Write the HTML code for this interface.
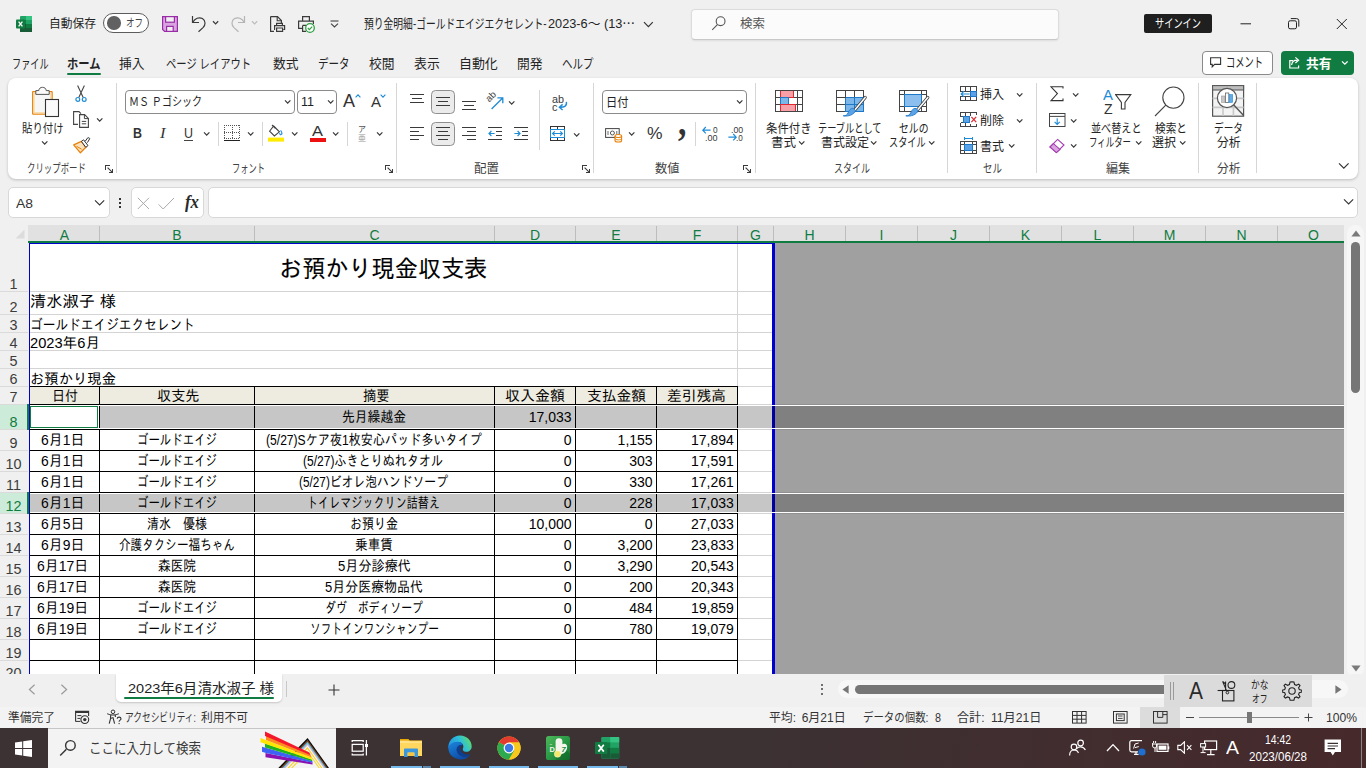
<!DOCTYPE html>
<html lang="ja"><head><meta charset="utf-8"><title>Excel</title>
<style>
html,body{margin:0;padding:0}
body{width:1366px;height:768px;overflow:hidden;position:relative;background:#f0f0f0;font-family:"Liberation Sans","Noto Sans CJK JP",sans-serif;color:#242424}
div,span,svg{position:absolute;box-sizing:border-box}
section{position:absolute;left:0;top:0;width:0;height:0}
.t{white-space:pre;transform-origin:0 50%}
.u{font-family:"Liberation Sans","Noto Sans CJK JP",sans-serif}
.c{font-family:"Liberation Sans","IPAGothic",sans-serif;color:#000}
.s{font-family:"Liberation Serif",serif;font-style:italic}
.d{font-family:"DejaVu Sans",sans-serif}
.sb{font-family:"Liberation Serif",serif;font-weight:bold}
</style></head>
<body>

<section aria-label="title bar"><svg style="left:16px;top:16px;" width="16" height="16" viewBox="0 0 16 16">
<rect x="4" y="0" width="12" height="16" rx="1" fill="#21a366"/>
<rect x="10" y="0" width="6" height="4" fill="#33c481"/>
<rect x="4" y="4" width="6" height="4" fill="#107c41"/>
<rect x="10" y="8" width="6" height="4" fill="#107c41"/>
<rect x="4" y="8" width="6" height="8" fill="#185c37"/>
<rect x="10" y="12" width="6" height="4" fill="#185c37"/>
<rect x="0" y="3.5" width="9" height="9" rx="1" fill="#107c41"/>
<path d="M2.6 5.6 L6.4 10.4 M6.4 5.6 L2.6 10.4" stroke="#fff" stroke-width="1.3"/>
</svg><span class="t u" style="left:48.5px;transform:scaleX(0.979);top:15.0px;font-size:12px;line-height:18px;">自動保存</span><div style="left:103px;top:13px;width:46px;height:20px;border:1px solid #5c5c5c;border-radius:10px;background:#fff"></div><div style="left:107px;top:16px;width:13.5px;height:13.5px;border-radius:50%;background:#616161"></div><span class="t u" style="left:126.0px;transform:scaleX(0.739);top:14.5px;font-size:11.5px;line-height:17px;color:#444;">オフ</span><svg style="left:162px;top:16px;" width="16" height="16" viewBox="0 0 16 16">
<path d="M0.6 0.6 H15.4 V15.4 H2.6 L0.6 13.4 Z" fill="#d9a4e0" stroke="#9a2ca8" stroke-width="1.2"/>
<rect x="3.6" y="0.6" width="8.8" height="5.6" fill="#f0f0f0" stroke="#9a2ca8" stroke-width="1.2"/>
<rect x="4.6" y="10.4" width="6.6" height="5" fill="#f0f0f0" stroke="#9a2ca8" stroke-width="1.2"/>
</svg><svg style="left:191px;top:14px;" width="16" height="19" viewBox="0 0 16 19"><path d="M1.5 2 V8.5 H8 M1.8 8.2 C4 4.5 8 2.6 11.4 4.6 C15 6.8 14.6 11 12 13.6 L7.5 17.8" fill="none" stroke="#3b3b3b" stroke-width="1.2"/></svg><svg style="left:211.9px;top:20.099999999999998px;" width="7.2" height="5.2" viewBox="0 0 7.2 5.2"><path d="M1 1.3 L3.6 3.9 L6.2 1.3" fill="none" stroke="#3a3a3a" stroke-width="1.25"/></svg><svg style="left:230px;top:14px;" width="16" height="19" viewBox="0 0 16 19"><path d="M14.5 2 V8.5 H8 M14.2 8.2 C12 4.5 8 2.6 4.6 4.6 C1 6.8 1.4 11 4 13.6 L8.5 17.8" fill="none" stroke="#b4b4b4" stroke-width="1.2"/></svg><svg style="left:250.9px;top:20.099999999999998px;" width="7.2" height="5.2" viewBox="0 0 7.2 5.2"><path d="M1 1.3 L3.6 3.9 L6.2 1.3" fill="none" stroke="#bdbdbd" stroke-width="1.25"/></svg><svg style="left:270px;top:16px;" width="16" height="16" viewBox="0 0 16 16">
<path d="M0.6 0.6 H7.5 L11.4 4.5 V7 M0.6 0.6 V15.4 H4" fill="none" stroke="#3b3b3b" stroke-width="1.2"/>
<path d="M7.2 0.8 V4.8 H11.2" fill="none" stroke="#3b3b3b" stroke-width="1.1"/>
<path d="M6.6 9.4 V7.4 H12.4 V9.4 M5 13.5 H4.6 V9.6 H14.6 V13.5 H13.4 M6.6 12 H12.6 V15.4 H6.6 Z" fill="none" stroke="#3b3b3b" stroke-width="1.2"/>
</svg><svg style="left:298px;top:16px;" width="17" height="17" viewBox="0 0 17 17">
<path d="M4.6 5 V0.6 H11.4 V5 M4 12.4 H0.6 V5.2 H15.4 V8 M4.6 9.4 H8 M4.6 9.4 V15.4 H8" fill="none" stroke="#3b3b3b" stroke-width="1.2"/>
<circle cx="12" cy="12" r="4.3" fill="#fff" stroke="#2ea043" stroke-width="1.3"/>
<path d="M9.8 12 L11.4 13.6 L14.2 10.6" fill="none" stroke="#2ea043" stroke-width="1.2"/>
</svg><svg style="left:330px;top:20px;" width="9" height="8" viewBox="0 0 9 8"><path d="M0.5 1 H8.5" stroke="#444" stroke-width="1.1"/><path d="M1 3.6 L4.5 7 L8 3.6" fill="none" stroke="#444" stroke-width="1.1"/></svg><span class="t u" style="left:364.0px;transform:scaleX(0.752);top:14.0px;font-size:13px;line-height:20px;">預り金明細-ゴールドエイジエクセレント-</span><span class="t u" style="left:548.0px;transform:scaleX(0.979);top:14.0px;font-size:13px;line-height:20px;">2023-6～ (13⋯</span><svg style="left:643.1px;top:20.1px;" width="10.8" height="8.8" viewBox="0 0 10.8 8.8"><path d="M1 2.2 L5.4 6.6 L9.8 2.2" fill="none" stroke="#333" stroke-width="1.2"/></svg><div style="left:691px;top:9px;width:368px;height:31px;background:#fbfbfb;border:1px solid #dcdcdc;border-bottom-color:#c8c8c8;border-radius:4px;box-shadow:0 1px 2px rgba(0,0,0,.08)"></div><svg style="left:711px;top:15px;" width="16" height="16" viewBox="0 0 16 16"><circle cx="9.6" cy="6.2" r="4.4" fill="none" stroke="#555" stroke-width="1.1"/><path d="M6.4 9.6 L1.2 14.8" stroke="#555" stroke-width="1.1"/></svg><span class="t u" style="left:740.0px;top:15.1px;font-size:12.5px;line-height:19px;color:#555;">検索</span><div style="left:1144px;top:14px;width:68px;height:19px;background:#1f1f1f;border-radius:2px"></div><span class="t u" style="left:1155.0px;transform:scaleX(0.766);top:14.5px;font-size:12px;line-height:18px;color:#fff;">サインイン</span><svg style="left:1240px;top:18px;" width="12" height="12" viewBox="0 0 12 12"><path d="M0.5 5.8 H11" stroke="#222" stroke-width="1"/></svg><svg style="left:1288px;top:18px;" width="12" height="12" viewBox="0 0 12 12"><rect x="0.5" y="2.8" width="8" height="8" rx="1.6" fill="none" stroke="#222" stroke-width="1"/><path d="M2.8 0.6 H8.6 Q10.8 0.6 10.8 2.8 V8.6" fill="none" stroke="#222" stroke-width="1"/></svg><svg style="left:1336px;top:18px;" width="12" height="12" viewBox="0 0 12 12"><path d="M0.8 1 L10.8 11 M10.8 1 L0.8 11" stroke="#222" stroke-width="1"/></svg></section>
<section aria-label="ribbon tabs"><span class="t u" style="left:12.0px;transform:scaleX(0.702);top:54.0px;font-size:13px;line-height:20px;color:#242424;">ファイル</span><span class="t u" style="left:67.0px;transform:scaleX(0.867);top:54.0px;font-size:13px;line-height:20px;color:#242424;font-weight:bold;">ホーム</span><span class="t u" style="left:119.0px;transform:scaleX(0.980);top:54.0px;font-size:13px;line-height:20px;color:#242424;">挿入</span><span class="t u" style="left:166.0px;transform:scaleX(0.792);top:54.0px;font-size:13px;line-height:20px;color:#242424;">ページ レイアウト</span><span class="t u" style="left:273.0px;transform:scaleX(0.980);top:54.0px;font-size:13px;line-height:20px;color:#242424;">数式</span><span class="t u" style="left:317.5px;transform:scaleX(0.807);top:54.0px;font-size:13px;line-height:20px;color:#242424;">データ</span><span class="t u" style="left:369.0px;transform:scaleX(0.980);top:54.0px;font-size:13px;line-height:20px;color:#242424;">校閲</span><span class="t u" style="left:414.0px;transform:scaleX(0.992);top:54.0px;font-size:13px;line-height:20px;color:#242424;">表示</span><span class="t u" style="left:459.0px;transform:scaleX(0.994);top:54.0px;font-size:13px;line-height:20px;color:#242424;">自動化</span><span class="t u" style="left:517.0px;transform:scaleX(0.980);top:54.0px;font-size:13px;line-height:20px;color:#242424;">開発</span><span class="t u" style="left:562.0px;transform:scaleX(0.807);top:54.0px;font-size:13px;line-height:20px;color:#242424;">ヘルプ</span><div style="left:67px;top:73px;width:34px;height:2px;background:#107c41;border-radius:1px"></div><div style="left:1202px;top:51px;width:71px;height:24px;background:#fff;border:1px solid #8a8a8a;border-radius:4px"></div><svg style="left:1210px;top:57px;" width="12" height="12" viewBox="0 0 12 12"><path d="M0.6 0.8 H10.6 V7.4 H4.6 L2.2 9.8 V7.4 H0.6 Z" fill="none" stroke="#333" stroke-width="1.1"/></svg><span class="t u" style="left:1226.0px;transform:scaleX(0.685);top:53.4px;font-size:13.5px;line-height:20px;color:#222;">コメント</span><div style="left:1281px;top:51px;width:73px;height:24px;background:#107c41;border-radius:4px"></div><svg style="left:1289px;top:56px;" width="12" height="13" viewBox="0 0 12 13"><path d="M4 4.6 H0.8 V12 H9.6 V9.4" fill="none" stroke="#fff" stroke-width="1.2"/><path d="M2.6 9 C3 6 5 4.2 8.2 4.2 M6.4 1.4 L9.6 4.2 L6.4 7" fill="none" stroke="#fff" stroke-width="1.2"/></svg><span class="t u" style="left:1305.5px;transform:scaleX(0.980);top:53.5px;font-size:13px;line-height:20px;color:#fff;font-weight:bold;">共有</span><svg style="left:1340.7px;top:60.400000000000006px;" width="7.6" height="5.6" viewBox="0 0 7.6 5.6"><path d="M1 1.4 L3.8 4.2 L6.6 1.4" fill="none" stroke="#fff" stroke-width="1.3"/></svg></section>
<section aria-label="formula bar"><div style="left:8px;top:187px;width:102px;height:31px;background:#fff;border:1px solid #d8d8d8;border-radius:5px"></div><span class="t u" style="left:16.0px;transform:scaleX(1.029);top:193.5px;font-size:13.5px;line-height:20px;color:#333;">A8</span><svg style="left:93.9px;top:198.4px;" width="11.2" height="9.2" viewBox="0 0 11.2 9.2"><path d="M1 2.3 L5.6 6.9 L10.2 2.3" fill="none" stroke="#333" stroke-width="1.1"/></svg><div style="left:119px;top:198px;width:2px;height:2px;background:#333"></div><div style="left:119px;top:202px;width:2px;height:2px;background:#333"></div><div style="left:119px;top:206px;width:2px;height:2px;background:#333"></div><div style="left:130.5px;top:187px;width:73px;height:31px;background:#fff;border:1px solid #d8d8d8;border-radius:5px"></div><svg style="left:137px;top:197px;" width="13" height="13" viewBox="0 0 13 13"><path d="M0.8 0.8 L12 12 M12 0.8 L0.8 12" stroke="#aaa" stroke-width="1"/></svg><svg style="left:158px;top:197px;" width="17" height="13" viewBox="0 0 17 13"><path d="M0.6 7.4 L5.2 12 L16 1" fill="none" stroke="#aaa" stroke-width="1"/></svg><span class="t s" style="left:184.5px;transform:scaleX(0.908);top:187.5px;font-size:18.5px;line-height:28px;color:#2a2a2a;font-weight:bold;">fx</span><div style="left:208px;top:187px;width:1150px;height:31px;background:#fff;border:1px solid #d8d8d8;border-radius:5px"></div><svg style="left:1342.9px;top:196.9px;" width="11.2" height="9.2" viewBox="0 0 11.2 9.2"><path d="M1 2.3 L5.6 6.9 L10.2 2.3" fill="none" stroke="#333" stroke-width="1.1"/></svg></section>
<section aria-label="ribbon"><div style="left:8px;top:78px;width:1350px;height:101px;background:#fff;border-radius:8px;box-shadow:0 1px 3px rgba(0,0,0,.22)"></div><svg style="left:31px;top:86px;" width="29" height="32" viewBox="0 0 29 32">
<rect x="1.7" y="5.7" width="19.4" height="22.4" rx="0.4" fill="#f6f6f6" stroke="#e8820c" stroke-width="1.3"/>
<rect x="3" y="7" width="16.8" height="19.8" fill="none" stroke="#fbd9a0" stroke-width="1.3"/>
<path d="M4.8 8.4 V4.6 H7.8 C7.8 0.2 15.2 0.2 15.2 4.6 H18.2 V8.4 Z" fill="#fafafa" stroke="#555" stroke-width="1"/>
<rect x="14.5" y="13.5" width="13" height="17" fill="#fafafa" stroke="#333" stroke-width="1.1"/>
</svg><span class="t u" style="left:22.0px;transform:scaleX(0.830);top:120.3px;font-size:12.5px;line-height:19px;color:#242424;">貼り付け</span><svg style="left:40.8px;top:140.0px;" width="7.4" height="5.4" viewBox="0 0 7.4 5.4"><path d="M1 1.4 L3.7 4.1 L6.4 1.4" fill="none" stroke="#3a3a3a" stroke-width="1.25"/></svg><svg style="left:75px;top:85px;" width="12" height="18" viewBox="0 0 12 18">
<path d="M2.6 0.6 L8.2 12.4 M9.4 0.6 L3.8 12.4" stroke="#444" stroke-width="1.1" fill="none"/>
<circle cx="2.8" cy="14.4" r="1.9" fill="none" stroke="#1e8bd7" stroke-width="1.2"/>
<circle cx="9.2" cy="14.4" r="1.9" fill="none" stroke="#1e8bd7" stroke-width="1.2"/>
</svg><svg style="left:73px;top:111px;" width="17" height="17" viewBox="0 0 17 17">
<path d="M5 13.4 H0.6 V0.6 H6 L8 2.6" fill="none" stroke="#444" stroke-width="1.1"/>
<path d="M6.6 3.6 H11.6 L15.4 7.4 V16.4 H6.6 Z" fill="#fff" stroke="#444" stroke-width="1.1"/>
<path d="M11.4 3.8 V7.6 H15.2" fill="none" stroke="#444" stroke-width="1"/>
<path d="M8.8 10.4 H13.2 M8.8 12.8 H13.2" stroke="#444" stroke-width="1"/>
</svg><svg style="left:95.8px;top:117.0px;" width="7.4" height="5.4" viewBox="0 0 7.4 5.4"><path d="M1 1.4 L3.7 4.1 L6.4 1.4" fill="none" stroke="#3a3a3a" stroke-width="1.25"/></svg><svg style="left:73px;top:137px;" width="18" height="17" viewBox="0 0 18 17">
<path d="M0.7 7.9 L8.4 4.4 L12.8 10.3 L7.4 15.8 Z" fill="#fde3bd" stroke="#e8820c" stroke-width="1.3" stroke-linejoin="round"/>
<path d="M3.4 9.2 L8.6 12.2" stroke="#e8820c" stroke-width="1"/>
<path d="M8.4 4.4 L10.6 2.8 L15 8.6 L12.8 10.3 Z" fill="#fff" stroke="#333" stroke-width="1"/>
<path d="M12 4.6 L14.6 0.9 Q16 0.2 16.8 1.6 L14.4 5.6" fill="#fff" stroke="#333" stroke-width="1"/>
</svg><span class="t u" style="left:27.0px;transform:scaleX(0.702);top:159.5px;font-size:12px;line-height:18px;color:#424242;">クリップボード</span><svg style="left:105px;top:165px;" width="9" height="9" viewBox="0 0 9 9"><path d="M0.5 4.5 V0.5 H4.5 M7.5 3.5 V7.5 H3.5" fill="none" stroke="#3a3a3a" stroke-width="1" shape-rendering="crispEdges"/><path d="M2.6 2.6 L7.4 7.4" fill="none" stroke="#3a3a3a" stroke-width="1.1"/></svg><div style="left:116px;top:83px;width:1px;height:90px;background:#d6d6d6"></div><div style="left:125px;top:90px;width:170px;height:24px;background:#fff;border:1px solid #8a8a8a;border-radius:4px"></div><span class="t u" style="left:129.0px;transform:scaleX(0.836);top:93.0px;font-size:12px;line-height:18px;color:#222;">ＭＳ Ｐゴシック</span><svg style="left:284.3px;top:99.0px;" width="7.4" height="5.4" viewBox="0 0 7.4 5.4"><path d="M1 1.4 L3.7 4.1 L6.4 1.4" fill="none" stroke="#3a3a3a" stroke-width="1.25"/></svg><div style="left:297px;top:90px;width:40px;height:24px;background:#fff;border:1px solid #8a8a8a;border-radius:4px"></div><span class="t u" style="left:301.0px;transform:scaleX(0.963);top:92.0px;font-size:13px;line-height:20px;color:#222;">11</span><svg style="left:326.8px;top:99.0px;" width="7.4" height="5.4" viewBox="0 0 7.4 5.4"><path d="M1 1.4 L3.7 4.1 L6.4 1.4" fill="none" stroke="#3a3a3a" stroke-width="1.25"/></svg><span class="t u" style="left:343.0px;top:87.5px;font-size:18px;line-height:27px;color:#333;">A</span><svg style="left:355px;top:94px;" width="6" height="4" viewBox="0 0 6 4"><path d="M0.6 3.4 L3 0.8 L5.4 3.4" fill="none" stroke="#1e8bd7" stroke-width="1.1"/></svg><span class="t u" style="left:371.0px;top:91.0px;font-size:15px;line-height:22px;color:#333;">A</span><svg style="left:380px;top:94px;" width="6" height="4" viewBox="0 0 6 4"><path d="M0.6 0.6 L3 3.2 L5.4 0.6" fill="none" stroke="#1e8bd7" stroke-width="1.1"/></svg><span class="t u" style="left:132.5px;transform:scaleX(0.889);top:123.0px;font-size:14px;line-height:21px;color:#333;font-weight:bold;">B</span><span class="t s" style="left:160.0px;transform:scaleX(1.177);top:123.0px;font-size:14px;line-height:21px;color:#333;">I</span><span class="t u" style="left:184.0px;transform:scaleX(0.889);top:122.5px;font-size:14px;line-height:21px;color:#333;">U</span><div style="left:184px;top:139.5px;width:9px;height:1px;background:#444"></div><svg style="left:203.3px;top:131.0px;" width="7.4" height="5.4" viewBox="0 0 7.4 5.4"><path d="M1 1.4 L3.7 4.1 L6.4 1.4" fill="none" stroke="#3a3a3a" stroke-width="1.25"/></svg><div style="left:218px;top:122px;width:1px;height:24px;background:#d6d6d6"></div><svg style="left:224px;top:125px;" width="17" height="17" viewBox="0 0 17 17">
<g fill="#555" shape-rendering="crispEdges"><rect x="0" y="0" width="1" height="1"/><rect x="2" y="0" width="1" height="1"/><rect x="4" y="0" width="1" height="1"/><rect x="6" y="0" width="1" height="1"/><rect x="8" y="0" width="1" height="1"/><rect x="10" y="0" width="1" height="1"/><rect x="12" y="0" width="1" height="1"/><rect x="14" y="0" width="1" height="1"/><rect x="0" y="7" width="1" height="1"/><rect x="2" y="7" width="1" height="1"/><rect x="4" y="7" width="1" height="1"/><rect x="6" y="7" width="1" height="1"/><rect x="8" y="7" width="1" height="1"/><rect x="10" y="7" width="1" height="1"/><rect x="12" y="7" width="1" height="1"/><rect x="14" y="7" width="1" height="1"/><rect x="0" y="13" width="1" height="1"/><rect x="2" y="13" width="1" height="1"/><rect x="4" y="13" width="1" height="1"/><rect x="6" y="13" width="1" height="1"/><rect x="8" y="13" width="1" height="1"/><rect x="10" y="13" width="1" height="1"/><rect x="12" y="13" width="1" height="1"/><rect x="14" y="13" width="1" height="1"/><rect x="0" y="0" width="1" height="1"/><rect x="0" y="2" width="1" height="1"/><rect x="0" y="4" width="1" height="1"/><rect x="0" y="6" width="1" height="1"/><rect x="0" y="8" width="1" height="1"/><rect x="0" y="10" width="1" height="1"/><rect x="0" y="12" width="1" height="1"/><rect x="8" y="0" width="1" height="1"/><rect x="8" y="2" width="1" height="1"/><rect x="8" y="4" width="1" height="1"/><rect x="8" y="6" width="1" height="1"/><rect x="8" y="8" width="1" height="1"/><rect x="8" y="10" width="1" height="1"/><rect x="8" y="12" width="1" height="1"/><rect x="15" y="0" width="1" height="1"/><rect x="15" y="2" width="1" height="1"/><rect x="15" y="4" width="1" height="1"/><rect x="15" y="6" width="1" height="1"/><rect x="15" y="8" width="1" height="1"/><rect x="15" y="10" width="1" height="1"/><rect x="15" y="12" width="1" height="1"/></g>
<rect x="0" y="15" width="16" height="1.4" fill="#222" shape-rendering="crispEdges"/>
</svg><svg style="left:247.3px;top:131.0px;" width="7.4" height="5.4" viewBox="0 0 7.4 5.4"><path d="M1 1.4 L3.7 4.1 L6.4 1.4" fill="none" stroke="#3a3a3a" stroke-width="1.25"/></svg><div style="left:262px;top:122px;width:1px;height:24px;background:#d6d6d6"></div><svg style="left:268px;top:124px;" width="17" height="18" viewBox="0 0 17 18">
<path d="M5.6 2 L11.4 7.8 L6.4 12 L1.6 7.2 Z" fill="#fff" stroke="#444" stroke-width="1.1"/>
<path d="M4 1 L7.4 4.4" stroke="#444" stroke-width="1.1"/>
<path d="M12.6 6.4 C13.8 8.2 14.6 9.2 13.6 10.4 C12.6 11.2 11.4 10.4 11.8 9" fill="none" stroke="#1e8bd7" stroke-width="1.1"/>
<rect x="0" y="13.6" width="16" height="4" fill="#ffea00"/>
</svg><svg style="left:291.3px;top:131.0px;" width="7.4" height="5.4" viewBox="0 0 7.4 5.4"><path d="M1 1.4 L3.7 4.1 L6.4 1.4" fill="none" stroke="#3a3a3a" stroke-width="1.25"/></svg><span class="t u" style="left:312.0px;transform:scaleX(1.098);top:120.0px;font-size:15px;line-height:22px;color:#333;">A</span><div style="left:310px;top:137.6px;width:16px;height:4px;background:#ee1111"></div><svg style="left:332.3px;top:131.0px;" width="7.4" height="5.4" viewBox="0 0 7.4 5.4"><path d="M1 1.4 L3.7 4.1 L6.4 1.4" fill="none" stroke="#3a3a3a" stroke-width="1.25"/></svg><div style="left:346.5px;top:122px;width:1px;height:24px;background:#d6d6d6"></div><span class="t u" style="left:357.5px;transform:scaleX(0.939);top:123.0px;font-size:8.5px;line-height:13px;color:#555;">ア</span><span class="t u" style="left:357.5px;transform:scaleX(0.939);top:131.5px;font-size:8.5px;line-height:13px;color:#999;">亜</span><svg style="left:376.3px;top:131.0px;" width="7.4" height="5.4" viewBox="0 0 7.4 5.4"><path d="M1 1.4 L3.7 4.1 L6.4 1.4" fill="none" stroke="#3a3a3a" stroke-width="1.25"/></svg><span class="t u" style="left:232.0px;transform:scaleX(0.687);top:159.5px;font-size:12px;line-height:18px;color:#424242;">フォント</span><svg style="left:385px;top:165px;" width="9" height="9" viewBox="0 0 9 9"><path d="M0.5 4.5 V0.5 H4.5 M7.5 3.5 V7.5 H3.5" fill="none" stroke="#3a3a3a" stroke-width="1" shape-rendering="crispEdges"/><path d="M2.6 2.6 L7.4 7.4" fill="none" stroke="#3a3a3a" stroke-width="1.1"/></svg><div style="left:396px;top:83px;width:1px;height:90px;background:#d6d6d6"></div><svg style="left:410px;top:94px;" width="14" height="9" viewBox="0 0 14 9"><g fill="#3a3a3a" shape-rendering="crispEdges"><rect x="0" y="0" width="14" height="1"/><rect x="2" y="4" width="10" height="1"/><rect x="0" y="8" width="14" height="1"/></g></svg><div style="left:431px;top:90px;width:24px;height:24px;background:#ebebeb;border:1px solid #8f8f8f;border-radius:4.5px"></div><svg style="left:436px;top:97px;" width="14" height="9" viewBox="0 0 14 9"><g fill="#3a3a3a" shape-rendering="crispEdges"><rect x="0" y="0" width="14" height="1"/><rect x="2" y="4" width="10" height="1"/><rect x="0" y="8" width="14" height="1"/></g></svg><svg style="left:462px;top:101px;" width="14" height="9" viewBox="0 0 14 9"><g fill="#3a3a3a" shape-rendering="crispEdges"><rect x="0" y="0" width="14" height="1"/><rect x="2" y="4" width="10" height="1"/><rect x="0" y="8" width="14" height="1"/></g></svg><svg style="left:485px;top:90px;" width="20" height="22" viewBox="0 0 20 22">
<path d="M6.6 19 L17.4 8.2 M12.4 7.8 H17.8 V13.2" fill="none" stroke="#1e8bd7" stroke-width="1.3"/>
<text x="0" y="0" transform="translate(4.2 12.4) rotate(-45)" font-family="Liberation Sans, sans-serif" font-size="9.5" fill="#3a3a3a">ab</text>
</svg><svg style="left:507.8px;top:99.5px;" width="7.4" height="5.4" viewBox="0 0 7.4 5.4"><path d="M1 1.4 L3.7 4.1 L6.4 1.4" fill="none" stroke="#3a3a3a" stroke-width="1.25"/></svg><div style="left:539px;top:90px;width:1px;height:60px;background:#d6d6d6"></div><span class="t u" style="left:552.3px;transform:scaleX(1.027);top:90.5px;font-size:10.5px;line-height:16px;color:#3a3a3a;">ab</span><span class="t u" style="left:552.3px;transform:scaleX(1.029);top:98.5px;font-size:10.5px;line-height:16px;color:#3a3a3a;">c</span><svg style="left:558px;top:101px;" width="10" height="10" viewBox="0 0 10 10"><path d="M8.4 0.8 C9 5.4 6 6.4 1.6 6.2 M4.6 3.4 L1.4 6.2 L4.6 9" fill="none" stroke="#1e8bd7" stroke-width="1.4"/></svg><svg style="left:410px;top:127px;" width="14" height="13" viewBox="0 0 14 13"><g fill="#3a3a3a" shape-rendering="crispEdges"><rect x="0" y="0" width="14" height="1"/><rect x="0" y="4" width="9" height="1"/><rect x="0" y="8" width="14" height="1"/><rect x="0" y="12" width="9" height="1"/></g></svg><div style="left:431px;top:122px;width:24px;height:24px;background:#ebebeb;border:1px solid #8f8f8f;border-radius:4.5px"></div><svg style="left:436px;top:127px;" width="14" height="13" viewBox="0 0 14 13"><g fill="#3a3a3a" shape-rendering="crispEdges"><rect x="0" y="0" width="14" height="1"/><rect x="2" y="4" width="10" height="1"/><rect x="0" y="8" width="14" height="1"/><rect x="2" y="12" width="10" height="1"/></g></svg><svg style="left:462px;top:127px;" width="14" height="13" viewBox="0 0 14 13"><g fill="#3a3a3a" shape-rendering="crispEdges"><rect x="0" y="0" width="14" height="1"/><rect x="5" y="4" width="9" height="1"/><rect x="0" y="8" width="14" height="1"/><rect x="5" y="12" width="9" height="1"/></g></svg><svg style="left:488px;top:127px;" width="14" height="13" viewBox="0 0 14 13"><g fill="#3a3a3a" shape-rendering="crispEdges"><rect x="0" y="0" width="14" height="1"/><rect x="8" y="4" width="6" height="1"/><rect x="8" y="8" width="6" height="1"/><rect x="0" y="12" width="14" height="1"/></g></svg><svg style="left:488px;top:129px;" width="7" height="9" viewBox="0 0 7 9"><path d="M6.6 4.5 H1 M3.4 2 L1 4.5 L3.4 7" fill="none" stroke="#1e8bd7" stroke-width="1.2"/></svg><svg style="left:514px;top:127px;" width="14" height="13" viewBox="0 0 14 13"><g fill="#3a3a3a" shape-rendering="crispEdges"><rect x="0" y="0" width="14" height="1"/><rect x="8" y="4" width="6" height="1"/><rect x="8" y="8" width="6" height="1"/><rect x="0" y="12" width="14" height="1"/></g></svg><svg style="left:514px;top:129px;" width="7" height="9" viewBox="0 0 7 9"><path d="M0.4 4.5 H6 M3.6 2 L6 4.5 L3.6 7" fill="none" stroke="#1e8bd7" stroke-width="1.2"/></svg><svg style="left:550px;top:126px;" width="16" height="16" viewBox="0 0 16 16">
<g fill="none" stroke="#333" stroke-width="1" shape-rendering="crispEdges"><path d="M0.5 3 V0.5 H14.5 V3 M0.5 12 V14.5 H14.5 V12 M7.5 0.5 V3 M7.5 12 V14.5"/></g>
<rect x="0.5" y="3.5" width="14" height="8" fill="#fff" stroke="#1e8bd7" stroke-width="1" shape-rendering="crispEdges"/>
<path d="M2.6 7.5 H12.4 M4.8 5.4 L2.6 7.5 L4.8 9.6 M10.2 5.4 L12.4 7.5 L10.2 9.6" fill="none" stroke="#1e8bd7" stroke-width="1.2"/>
</svg><svg style="left:572.8px;top:131.5px;" width="7.4" height="5.4" viewBox="0 0 7.4 5.4"><path d="M1 1.4 L3.7 4.1 L6.4 1.4" fill="none" stroke="#3a3a3a" stroke-width="1.25"/></svg><span class="t u" style="left:474.0px;transform:scaleX(1.041);top:159.5px;font-size:12px;line-height:18px;color:#424242;">配置</span><svg style="left:582px;top:165px;" width="9" height="9" viewBox="0 0 9 9"><path d="M0.5 4.5 V0.5 H4.5 M7.5 3.5 V7.5 H3.5" fill="none" stroke="#3a3a3a" stroke-width="1" shape-rendering="crispEdges"/><path d="M2.6 2.6 L7.4 7.4" fill="none" stroke="#3a3a3a" stroke-width="1.1"/></svg><div style="left:593px;top:83px;width:1px;height:90px;background:#d6d6d6"></div><div style="left:602px;top:90px;width:145px;height:24px;background:#fff;border:1px solid #8a8a8a;border-radius:4px"></div><span class="t u" style="left:606.0px;transform:scaleX(0.899);top:93.5px;font-size:12.5px;line-height:19px;color:#222;">日付</span><svg style="left:736.3px;top:99.0px;" width="7.4" height="5.4" viewBox="0 0 7.4 5.4"><path d="M1 1.4 L3.7 4.1 L6.4 1.4" fill="none" stroke="#3a3a3a" stroke-width="1.25"/></svg><svg style="left:605px;top:127px;" width="18" height="16" viewBox="0 0 18 16">
<rect x="0.6" y="1.6" width="13.6" height="8.8" fill="#fff" stroke="#444" stroke-width="1"/>
<circle cx="7.4" cy="6" r="2" fill="none" stroke="#444" stroke-width="0.9"/>
<path d="M3 4 V8 M11.8 4 V8" stroke="#444" stroke-width="0.8"/>
<path d="M10 9 V13.4 C10 15.6 16.6 15.6 16.6 13.4 V9" fill="#fff" stroke="#e8820c" stroke-width="1.1"/>
<ellipse cx="13.3" cy="9" rx="3.3" ry="1.5" fill="#fff" stroke="#e8820c" stroke-width="1.1"/>
<path d="M10 11.3 C10 13.4 16.6 13.4 16.6 11.3" fill="none" stroke="#e8820c" stroke-width="1"/>
</svg><svg style="left:628.3px;top:131.0px;" width="7.4" height="5.4" viewBox="0 0 7.4 5.4"><path d="M1 1.4 L3.7 4.1 L6.4 1.4" fill="none" stroke="#3a3a3a" stroke-width="1.25"/></svg><span class="t u" style="left:646.5px;transform:scaleX(1.025);top:120.5px;font-size:17px;line-height:26px;color:#333;">%</span><span class="t sb" style="left:677.5px;transform:scaleX(0.840);top:91.5px;font-size:40px;line-height:60px;color:#333;">,</span><div style="left:695px;top:122px;width:1px;height:24px;background:#d6d6d6"></div><svg style="left:702px;top:126px;" width="10" height="9" viewBox="0 0 10 9"><path d="M0.8 4.2 H8.6 M3.8 1 L0.8 4.2 L3.8 7.4" fill="none" stroke="#1e8bd7" stroke-width="1.2"/></svg><span class="t u" style="left:713.0px;transform:scaleX(0.868);top:122.6px;font-size:9.5px;line-height:14px;color:#3a3a3a;">0</span><span class="t u" style="left:704.8px;transform:scaleX(0.953);top:131.0px;font-size:9.5px;line-height:14px;color:#3a3a3a;">.00</span><svg style="left:728px;top:133px;" width="10" height="9" viewBox="0 0 10 9"><path d="M0.4 4.2 H8.2 M5.2 1 L8.2 4.2 L5.2 7.4" fill="none" stroke="#1e8bd7" stroke-width="1.2"/></svg><span class="t u" style="left:731.0px;transform:scaleX(0.923);top:122.6px;font-size:9.5px;line-height:14px;color:#3a3a3a;">.00</span><span class="t u" style="left:736.4px;transform:scaleX(0.857);top:131.0px;font-size:9.5px;line-height:14px;color:#3a3a3a;">.0</span><span class="t u" style="left:655.0px;transform:scaleX(1.020);top:159.5px;font-size:12px;line-height:18px;color:#424242;">数値</span><svg style="left:743px;top:165px;" width="9" height="9" viewBox="0 0 9 9"><path d="M0.5 4.5 V0.5 H4.5 M7.5 3.5 V7.5 H3.5" fill="none" stroke="#3a3a3a" stroke-width="1" shape-rendering="crispEdges"/><path d="M2.6 2.6 L7.4 7.4" fill="none" stroke="#3a3a3a" stroke-width="1.1"/></svg><div style="left:755px;top:83px;width:1px;height:90px;background:#d6d6d6"></div><svg style="left:775px;top:90px;" width="29" height="23" viewBox="0 0 29 23">
<rect x="0.5" y="0.5" width="27" height="21" fill="#fff"/>
<g shape-rendering="crispEdges">
<rect x="5.5" y="0.5" width="12.5" height="7" fill="#f8a0a8" stroke="#e0282e" stroke-width="1"/>
<rect x="5.5" y="7.5" width="8" height="7" fill="#7db7ea" stroke="#1e78c8" stroke-width="1"/>
<rect x="5.5" y="14.5" width="14.5" height="7" fill="#f8a0a8" stroke="#e0282e" stroke-width="1"/>
<path d="M22.5 0.5 V21.5 M18 7.5 H27.5 M20 14.5 H27.5 M0.5 7.5 H5.5 M0.5 14.5 H5.5 M5.5 0.5 V21.5" stroke="#444" stroke-width="1" fill="none"/>
<rect x="5.5" y="0.5" width="12.5" height="7" fill="none" stroke="#e0282e" stroke-width="1"/>
<rect x="5.5" y="7.5" width="8" height="7" fill="none" stroke="#1e78c8" stroke-width="1"/>
<rect x="5.5" y="14.5" width="14.5" height="7" fill="none" stroke="#e0282e" stroke-width="1"/>
<rect x="0.5" y="0.5" width="27" height="21" fill="none" stroke="#444" stroke-width="1"/>
</g>
</svg><span class="t u" style="left:766.0px;transform:scaleX(0.910);top:120.0px;font-size:12.5px;line-height:19px;color:#242424;">条件付き</span><span class="t u" style="left:771.0px;top:134.0px;font-size:12.5px;line-height:19px;color:#242424;">書式</span><svg style="left:798.3px;top:140.0px;" width="7.4" height="5.4" viewBox="0 0 7.4 5.4"><path d="M1 1.4 L3.7 4.1 L6.4 1.4" fill="none" stroke="#3a3a3a" stroke-width="1.25"/></svg><svg style="left:836px;top:90px;" width="32" height="28" viewBox="0 0 32 28">
<g shape-rendering="crispEdges">
<rect x="0.5" y="0.5" width="27" height="21" fill="#fff" stroke="#444" stroke-width="1"/>
<rect x="9.5" y="7.5" width="18" height="14" fill="#7db7ea"/>
<path d="M0.5 7.5 H9.5 M0.5 14.5 H9.5 M9.5 0.5 V7.5 M18.5 0.5 V7.5" stroke="#444" stroke-width="1" fill="none"/>
<path d="M9.5 7.5 H27.5 M9.5 14.5 H27.5 M9.5 7.5 V21.5 M18.5 7.5 V21.5 M9.5 21.5 H27.5 M27.5 7.5 V21.5" stroke="#1e78c8" stroke-width="1" fill="none"/>
</g>
<path d="M29.200000000000003 7.4 L18.6 20.2" stroke="#444" stroke-width="3.2" stroke-linecap="round"/>
<path d="M29.200000000000003 7.4 L18.6 20.2" stroke="#fff" stroke-width="1.5" stroke-linecap="round"/>
<path d="M17.400000000000002 18.6 C14.600000000000001 17.6 12.8 21 12.200000000000001 22.6 C11.600000000000001 24.6 9.600000000000001 26.2 7.200000000000001 25.8 C12.600000000000001 26.8 18.0 24.6 19.6 20.6 Z" fill="#5ba3e6" stroke="#1e78c8" stroke-width="0.9"/>
</svg><span class="t u" style="left:818.0px;transform:scaleX(0.735);top:120.0px;font-size:12.5px;line-height:19px;color:#242424;">テーブルとして</span><span class="t u" style="left:820.5px;transform:scaleX(0.960);top:134.0px;font-size:12.5px;line-height:19px;color:#242424;">書式設定</span><svg style="left:870.3px;top:140.0px;" width="7.4" height="5.4" viewBox="0 0 7.4 5.4"><path d="M1 1.4 L3.7 4.1 L6.4 1.4" fill="none" stroke="#3a3a3a" stroke-width="1.25"/></svg><svg style="left:899px;top:90px;" width="32" height="28" viewBox="0 0 32 28">
<g shape-rendering="crispEdges">
<rect x="0.5" y="0.5" width="27" height="21" fill="#fff" stroke="#444" stroke-width="1"/>
<path d="M0.5 4.5 H27.5 M0.5 16.5 H27.5 M5.5 0.5 V21.5 M22.5 0.5 V21.5" stroke="#444" stroke-width="1" fill="none"/>
<rect x="5.5" y="4.5" width="17" height="12" fill="#8cbfee" stroke="#1e78c8" stroke-width="1"/>
</g>
<path d="M28.799999999999997 7.4 L18.2 20.2" stroke="#444" stroke-width="3.2" stroke-linecap="round"/>
<path d="M28.799999999999997 7.4 L18.2 20.2" stroke="#fff" stroke-width="1.5" stroke-linecap="round"/>
<path d="M17.0 18.6 C14.2 17.6 12.399999999999999 21 11.799999999999999 22.6 C11.2 24.6 9.2 26.2 6.799999999999999 25.8 C12.2 26.8 17.599999999999998 24.6 19.2 20.6 Z" fill="#5ba3e6" stroke="#1e78c8" stroke-width="0.9"/>
</svg><span class="t u" style="left:898.5px;transform:scaleX(0.786);top:120.0px;font-size:12.5px;line-height:19px;color:#242424;">セルの</span><span class="t u" style="left:889.0px;transform:scaleX(0.730);top:134.0px;font-size:12.5px;line-height:19px;color:#242424;">スタイル</span><svg style="left:928.3px;top:140.0px;" width="7.4" height="5.4" viewBox="0 0 7.4 5.4"><path d="M1 1.4 L3.7 4.1 L6.4 1.4" fill="none" stroke="#3a3a3a" stroke-width="1.25"/></svg><span class="t u" style="left:834.0px;transform:scaleX(0.750);top:159.5px;font-size:12px;line-height:18px;color:#424242;">スタイル</span><div style="left:947px;top:83px;width:1px;height:90px;background:#d6d6d6"></div><svg style="left:960px;top:86px;" width="18" height="16" viewBox="0 0 18 16">
<g shape-rendering="crispEdges" fill="none" stroke="#444" stroke-width="1">
<rect x="0.5" y="0.5" width="16" height="14" fill="#fff"/>
<path d="M0.5 5.5 H16.5 M0.5 10.5 H16.5 M5.5 0.5 V14.5 M10.5 0.5 V14.5"/>
<rect x="10.5" y="5.5" width="6" height="5" fill="#5ba3e6" stroke="#1e78c8"/>
</g>
<rect x="0" y="6" width="10" height="4" fill="#fff"/>
<path d="M9.6 8 H1.2 M4 5.2 L1.2 8 L4 10.8" fill="none" stroke="#1e8bd7" stroke-width="1.2"/>
</svg><span class="t u" style="left:980.0px;transform:scaleX(0.959);top:86.0px;font-size:12.5px;line-height:19px;color:#242424;">挿入</span><svg style="left:1015.8px;top:91.5px;" width="7.4" height="5.4" viewBox="0 0 7.4 5.4"><path d="M1 1.4 L3.7 4.1 L6.4 1.4" fill="none" stroke="#3a3a3a" stroke-width="1.25"/></svg><svg style="left:960px;top:112px;" width="18" height="16" viewBox="0 0 18 16">
<g shape-rendering="crispEdges" fill="none" stroke="#444" stroke-width="1">
<path d="M0.5 4.5 V0.5 H16.5 V3 M0.5 10.5 V14.5 H16.5 V12 M5.5 0.5 V4.5 M10.5 0.5 V3.5 M5.5 10.5 V14.5 M10.5 11.5 V14.5 M0.5 4.5 H4 M0.5 10.5 H4"/>
<rect x="3.5" y="4.5" width="6" height="6" fill="#5ba3e6" stroke="#1e78c8"/>
</g>
<path d="M11.4 4.8 L16.2 10.2 M16.2 4.8 L11.4 10.2" stroke="#e0282e" stroke-width="1.2"/>
</svg><span class="t u" style="left:980.0px;transform:scaleX(0.959);top:112.0px;font-size:12.5px;line-height:19px;color:#242424;">削除</span><svg style="left:1015.8px;top:117.5px;" width="7.4" height="5.4" viewBox="0 0 7.4 5.4"><path d="M1 1.4 L3.7 4.1 L6.4 1.4" fill="none" stroke="#3a3a3a" stroke-width="1.25"/></svg><svg style="left:960px;top:137px;" width="18" height="17" viewBox="0 0 18 17">
<g shape-rendering="crispEdges" fill="none" stroke="#444" stroke-width="1">
<rect x="0.5" y="4.5" width="16" height="12" fill="#fff"/>
<path d="M0.5 7.5 H16.5 M0.5 13.5 H16.5 M4.5 4.5 V16.5 M12.5 4.5 V16.5"/>
<rect x="4.5" y="7.5" width="8" height="6" fill="#5ba3e6" stroke="#1e78c8"/>
<path d="M4.5 0 V3 M12.5 0 V3 M4.5 1.5 H12.5" stroke="#1e8bd7"/>
</g>
</svg><span class="t u" style="left:980.0px;transform:scaleX(0.959);top:137.5px;font-size:12.5px;line-height:19px;color:#242424;">書式</span><svg style="left:1008.3px;top:143.0px;" width="7.4" height="5.4" viewBox="0 0 7.4 5.4"><path d="M1 1.4 L3.7 4.1 L6.4 1.4" fill="none" stroke="#3a3a3a" stroke-width="1.25"/></svg><span class="t u" style="left:982.5px;transform:scaleX(0.791);top:159.5px;font-size:12px;line-height:18px;color:#424242;">セル</span><div style="left:1036px;top:83px;width:1px;height:90px;background:#d6d6d6"></div><svg style="left:1050px;top:86px;" width="15" height="16" viewBox="0 0 15 16"><path d="M13 2.6 V0.8 H1 L7.4 7.6 L1 14.6 H13 V12.6" fill="none" stroke="#333" stroke-width="1.1"/></svg><svg style="left:1071.8px;top:91.5px;" width="7.4" height="5.4" viewBox="0 0 7.4 5.4"><path d="M1 1.4 L3.7 4.1 L6.4 1.4" fill="none" stroke="#3a3a3a" stroke-width="1.25"/></svg><svg style="left:1049px;top:113px;" width="17" height="14" viewBox="0 0 17 14"><rect x="0.5" y="0.5" width="15.5" height="13" fill="#fff" stroke="#444" stroke-width="1"/><path d="M0.5 3.4 H16" stroke="#444" stroke-width="1"/><path d="M8.2 5.2 V11.4 M5.6 8.8 L8.2 11.4 L10.8 8.8" fill="none" stroke="#1e8bd7" stroke-width="1.1"/></svg><svg style="left:1070.3px;top:117.5px;" width="7.4" height="5.4" viewBox="0 0 7.4 5.4"><path d="M1 1.4 L3.7 4.1 L6.4 1.4" fill="none" stroke="#3a3a3a" stroke-width="1.25"/></svg><svg style="left:1048px;top:138px;" width="18" height="16" viewBox="0 0 18 16">
<path d="M9.6 1.4 L16 7 L8.4 14.6 L2 9 Z" fill="#fff" stroke="#a43bb0" stroke-width="1.1"/>
<path d="M5.4 5.6 L12 11.4 L8.4 14.6 L2 9 Z" fill="#d9a4e0" stroke="#a43bb0" stroke-width="1.1"/>
</svg><svg style="left:1070.3px;top:143.0px;" width="7.4" height="5.4" viewBox="0 0 7.4 5.4"><path d="M1 1.4 L3.7 4.1 L6.4 1.4" fill="none" stroke="#3a3a3a" stroke-width="1.25"/></svg><span class="t u" style="left:1103.0px;transform:scaleX(0.967);top:82.7px;font-size:15.5px;line-height:23px;color:#1e8bd7;">A</span><span class="t u" style="left:1103.5px;transform:scaleX(0.908);top:96.5px;font-size:15.5px;line-height:23px;color:#333;">Z</span><svg style="left:1115px;top:94px;" width="17" height="16" viewBox="0 0 17 16"><path d="M0.6 0.6 H15.8 L10 8.4 V15 H6.4 V8.4 Z" fill="#fff" stroke="#3a3a3a" stroke-width="1.1"/></svg><span class="t u" style="left:1091.0px;transform:scaleX(0.808);top:120.0px;font-size:12.5px;line-height:19px;color:#242424;">並べ替えと</span><span class="t u" style="left:1089.0px;transform:scaleX(0.675);top:134.0px;font-size:12.5px;line-height:19px;color:#242424;">フィルター</span><svg style="left:1135.3px;top:140.0px;" width="7.4" height="5.4" viewBox="0 0 7.4 5.4"><path d="M1 1.4 L3.7 4.1 L6.4 1.4" fill="none" stroke="#3a3a3a" stroke-width="1.25"/></svg><svg style="left:1154px;top:86px;" width="32" height="31" viewBox="0 0 32 31"><circle cx="19.4" cy="11.6" r="10.6" fill="#fff" stroke="#444" stroke-width="1.1"/><path d="M11.8 19.2 L1 30" stroke="#444" stroke-width="1.1"/></svg><span class="t u" style="left:1154.5px;transform:scaleX(0.853);top:120.0px;font-size:12.5px;line-height:19px;color:#242424;">検索と</span><span class="t u" style="left:1152.0px;transform:scaleX(0.959);top:134.0px;font-size:12.5px;line-height:19px;color:#242424;">選択</span><svg style="left:1179.3px;top:140.0px;" width="7.4" height="5.4" viewBox="0 0 7.4 5.4"><path d="M1 1.4 L3.7 4.1 L6.4 1.4" fill="none" stroke="#3a3a3a" stroke-width="1.25"/></svg><span class="t u" style="left:1106.0px;top:159.5px;font-size:12px;line-height:18px;color:#424242;">編集</span><div style="left:1198px;top:83px;width:1px;height:90px;background:#d6d6d6"></div><svg style="left:1212px;top:85px;" width="33" height="33" viewBox="0 0 33 33">
<rect x="0.6" y="0.6" width="31" height="30.6" fill="#f3f3f3" stroke="#555" stroke-width="1.2"/>
<rect x="0.6" y="0.6" width="31" height="4.4" fill="#bdbdbd" stroke="#555" stroke-width="1"/>
<path d="M0.6 13.4 H31.6 M0.6 22.4 H31.6 M11 5 V31 M21.4 5 V31" stroke="#c8c8c8" stroke-width="1.6"/>
<circle cx="15" cy="13" r="9.6" fill="#fff" stroke="#555" stroke-width="1.2"/>
<rect x="9.6" y="11" width="3.4" height="6.4" fill="#c8c8c8" stroke="#999" stroke-width="0.6"/>
<rect x="13.4" y="8" width="3.4" height="9.4" fill="#fff" stroke="#666" stroke-width="0.8"/>
<rect x="17.2" y="9.6" width="3.4" height="7.8" fill="#64aae6" stroke="#1e8bd7" stroke-width="0.6"/>
<path d="M21.8 20 L31.6 30.4" stroke="#555" stroke-width="1.4"/>
</svg><span class="t u" style="left:1214.0px;transform:scaleX(0.773);top:120.0px;font-size:12.5px;line-height:19px;color:#242424;">データ</span><span class="t u" style="left:1216.5px;transform:scaleX(0.939);top:134.0px;font-size:12.5px;line-height:19px;color:#242424;">分析</span><span class="t u" style="left:1216.5px;transform:scaleX(0.979);top:159.5px;font-size:12px;line-height:18px;color:#424242;">分析</span><div style="left:1256px;top:83px;width:1px;height:90px;background:#d6d6d6"></div><svg style="left:1337.7px;top:160.7px;" width="11.6" height="9.6" viewBox="0 0 11.6 9.6"><path d="M1 2.4 L5.8 7.2 L10.6 2.4" fill="none" stroke="#333" stroke-width="1.2"/></svg></section>
<section aria-label="worksheet (page break preview)"><div style="left:0px;top:225px;width:28px;height:449px;background:#f0f0f0"></div><svg style="left:15px;top:229px;" width="10" height="10" viewBox="0 0 10 10"><path d="M9.5 0.5 V9.5 H0.5 Z" fill="#dcdcdc"/></svg><div style="left:28px;top:225px;width:1316px;height:16px;background:#e1e1e1"></div><div style="left:28px;top:241px;width:1316px;height:2px;background:#107c41"></div><span class="t c" style="left:59.8px;top:224.7px;font-size:14px;line-height:21px;color:#107c41;">A</span><div style="left:99px;top:226px;width:1px;height:15px;background:#bdbdbd"></div><span class="t c" style="left:172.3px;top:224.7px;font-size:14px;line-height:21px;color:#107c41;">B</span><div style="left:254px;top:226px;width:1px;height:15px;background:#bdbdbd"></div><span class="t c" style="left:369.4px;top:224.7px;font-size:14px;line-height:21px;color:#107c41;">C</span><div style="left:494px;top:226px;width:1px;height:15px;background:#bdbdbd"></div><span class="t c" style="left:529.9px;top:224.7px;font-size:14px;line-height:21px;color:#107c41;">D</span><div style="left:575px;top:226px;width:1px;height:15px;background:#bdbdbd"></div><span class="t c" style="left:611.3px;top:224.7px;font-size:14px;line-height:21px;color:#107c41;">E</span><div style="left:656px;top:226px;width:1px;height:15px;background:#bdbdbd"></div><span class="t c" style="left:692.7px;top:224.7px;font-size:14px;line-height:21px;color:#107c41;">F</span><div style="left:737px;top:226px;width:1px;height:15px;background:#bdbdbd"></div><span class="t c" style="left:750.1px;top:224.7px;font-size:14px;line-height:21px;color:#107c41;">G</span><div style="left:773px;top:226px;width:1px;height:15px;background:#bdbdbd"></div><span class="t c" style="left:804.4px;top:224.7px;font-size:14px;line-height:21px;color:#107c41;">H</span><div style="left:845px;top:226px;width:1px;height:15px;background:#bdbdbd"></div><span class="t c" style="left:879.6px;top:224.7px;font-size:14px;line-height:21px;color:#107c41;">I</span><div style="left:917px;top:226px;width:1px;height:15px;background:#bdbdbd"></div><span class="t c" style="left:950.0px;top:224.7px;font-size:14px;line-height:21px;color:#107c41;">J</span><div style="left:989px;top:226px;width:1px;height:15px;background:#bdbdbd"></div><span class="t c" style="left:1020.8px;top:224.7px;font-size:14px;line-height:21px;color:#107c41;">K</span><div style="left:1061px;top:226px;width:1px;height:15px;background:#bdbdbd"></div><span class="t c" style="left:1093.6px;top:224.7px;font-size:14px;line-height:21px;color:#107c41;">L</span><div style="left:1133px;top:226px;width:1px;height:15px;background:#bdbdbd"></div><span class="t c" style="left:1163.7px;top:224.7px;font-size:14px;line-height:21px;color:#107c41;">M</span><div style="left:1205px;top:226px;width:1px;height:15px;background:#bdbdbd"></div><span class="t c" style="left:1236.4px;top:224.7px;font-size:14px;line-height:21px;color:#107c41;">N</span><div style="left:1277px;top:226px;width:1px;height:15px;background:#bdbdbd"></div><span class="t c" style="left:1308.1px;top:224.7px;font-size:14px;line-height:21px;color:#107c41;">O</span><div style="left:30px;top:244px;width:742px;height:430px;background:#fff"></div><div style="left:775px;top:243px;width:569px;height:431px;background:#a0a0a0"></div><div style="left:0px;top:291px;width:28px;height:1px;background:#dadada"></div><span class="t c" style="left:9.5px;top:272.8px;font-size:14.4px;line-height:22px;color:#3c3c3c;">1</span><div style="left:0px;top:314px;width:28px;height:1px;background:#dadada"></div><span class="t c" style="left:9.5px;top:295.8px;font-size:14.4px;line-height:22px;color:#3c3c3c;">2</span><div style="left:0px;top:332px;width:28px;height:1px;background:#dadada"></div><span class="t c" style="left:9.5px;top:313.8px;font-size:14.4px;line-height:22px;color:#3c3c3c;">3</span><div style="left:0px;top:350px;width:28px;height:1px;background:#dadada"></div><span class="t c" style="left:9.5px;top:331.8px;font-size:14.4px;line-height:22px;color:#3c3c3c;">4</span><div style="left:0px;top:368px;width:28px;height:1px;background:#dadada"></div><span class="t c" style="left:9.5px;top:349.8px;font-size:14.4px;line-height:22px;color:#3c3c3c;">5</span><div style="left:0px;top:386px;width:28px;height:1px;background:#dadada"></div><span class="t c" style="left:9.5px;top:367.8px;font-size:14.4px;line-height:22px;color:#3c3c3c;">6</span><div style="left:0px;top:404px;width:28px;height:1px;background:#dadada"></div><span class="t c" style="left:9.5px;top:385.8px;font-size:14.4px;line-height:22px;color:#3c3c3c;">7</span><div style="left:0px;top:405px;width:28px;height:25px;background:#cdebd9"></div><div style="left:27px;top:404px;width:2px;height:26px;background:#107c41"></div><div style="left:0px;top:429px;width:27px;height:1px;background:#dadada"></div><span class="t c" style="left:9.5px;top:410.8px;font-size:14.4px;line-height:22px;color:#107c41;">8</span><div style="left:0px;top:450px;width:28px;height:1px;background:#dadada"></div><span class="t c" style="left:9.5px;top:431.8px;font-size:14.4px;line-height:22px;color:#3c3c3c;">9</span><div style="left:0px;top:471px;width:28px;height:1px;background:#dadada"></div><span class="t c" style="left:5.5px;top:452.8px;font-size:14.4px;line-height:22px;color:#3c3c3c;">10</span><div style="left:0px;top:492px;width:28px;height:1px;background:#dadada"></div><span class="t c" style="left:6.0px;top:473.8px;font-size:14.4px;line-height:22px;color:#3c3c3c;">11</span><div style="left:0px;top:493px;width:28px;height:21px;background:#cdebd9"></div><div style="left:27px;top:492px;width:2px;height:22px;background:#107c41"></div><div style="left:0px;top:513px;width:27px;height:1px;background:#dadada"></div><span class="t c" style="left:5.5px;top:494.8px;font-size:14.4px;line-height:22px;color:#107c41;">12</span><div style="left:0px;top:534px;width:28px;height:1px;background:#dadada"></div><span class="t c" style="left:5.5px;top:515.8px;font-size:14.4px;line-height:22px;color:#3c3c3c;">13</span><div style="left:0px;top:555px;width:28px;height:1px;background:#dadada"></div><span class="t c" style="left:5.5px;top:536.8px;font-size:14.4px;line-height:22px;color:#3c3c3c;">14</span><div style="left:0px;top:576px;width:28px;height:1px;background:#dadada"></div><span class="t c" style="left:5.5px;top:557.8px;font-size:14.4px;line-height:22px;color:#3c3c3c;">15</span><div style="left:0px;top:597px;width:28px;height:1px;background:#dadada"></div><span class="t c" style="left:5.5px;top:578.8px;font-size:14.4px;line-height:22px;color:#3c3c3c;">16</span><div style="left:0px;top:618px;width:28px;height:1px;background:#dadada"></div><span class="t c" style="left:5.5px;top:599.8px;font-size:14.4px;line-height:22px;color:#3c3c3c;">17</span><div style="left:0px;top:639px;width:28px;height:1px;background:#dadada"></div><span class="t c" style="left:5.5px;top:620.8px;font-size:14.4px;line-height:22px;color:#3c3c3c;">18</span><div style="left:0px;top:660px;width:28px;height:1px;background:#dadada"></div><span class="t c" style="left:5.5px;top:641.8px;font-size:14.4px;line-height:22px;color:#3c3c3c;">19</span><div style="left:0;top:662px;width:28px;height:12px;overflow:hidden"><span class="t c" style="left:5.5px;top:0.4px;font-size:14.4px;line-height:22px;color:#3c3c3c">20</span></div><div style="left:30px;top:291px;width:742px;height:1px;background:#d4d4d4"></div><div style="left:30px;top:314px;width:742px;height:1px;background:#d4d4d4"></div><div style="left:30px;top:332px;width:742px;height:1px;background:#d4d4d4"></div><div style="left:30px;top:350px;width:742px;height:1px;background:#d4d4d4"></div><div style="left:30px;top:368px;width:742px;height:1px;background:#d4d4d4"></div><div style="left:30px;top:386px;width:742px;height:1px;background:#d4d4d4"></div><div style="left:738px;top:404px;width:34px;height:1px;background:#d4d4d4"></div><div style="left:738px;top:429px;width:34px;height:1px;background:#d4d4d4"></div><div style="left:738px;top:450px;width:34px;height:1px;background:#d4d4d4"></div><div style="left:738px;top:471px;width:34px;height:1px;background:#d4d4d4"></div><div style="left:738px;top:492px;width:34px;height:1px;background:#d4d4d4"></div><div style="left:738px;top:513px;width:34px;height:1px;background:#d4d4d4"></div><div style="left:738px;top:534px;width:34px;height:1px;background:#d4d4d4"></div><div style="left:738px;top:555px;width:34px;height:1px;background:#d4d4d4"></div><div style="left:738px;top:576px;width:34px;height:1px;background:#d4d4d4"></div><div style="left:738px;top:597px;width:34px;height:1px;background:#d4d4d4"></div><div style="left:738px;top:618px;width:34px;height:1px;background:#d4d4d4"></div><div style="left:738px;top:639px;width:34px;height:1px;background:#d4d4d4"></div><div style="left:738px;top:660px;width:34px;height:1px;background:#d4d4d4"></div><div style="left:737px;top:244px;width:1px;height:142px;background:#d4d4d4"></div><div style="left:30px;top:387px;width:707px;height:17px;background:#eeece1"></div><div style="left:30px;top:405px;width:742px;height:24px;background:#c6c6c6"></div><div style="left:775px;top:405px;width:569px;height:24px;background:#808080"></div><div style="left:772px;top:405px;width:3px;height:24px;background:#0000a0"></div><div style="left:30px;top:405px;width:1314px;height:1px;background:#fff"></div><div style="left:30px;top:428px;width:1314px;height:1px;background:#fff"></div><div style="left:30px;top:493px;width:742px;height:20px;background:#c6c6c6"></div><div style="left:775px;top:493px;width:569px;height:20px;background:#808080"></div><div style="left:772px;top:493px;width:3px;height:20px;background:#0000a0"></div><div style="left:30px;top:493px;width:1314px;height:1px;background:#fff"></div><div style="left:30px;top:512px;width:1314px;height:1px;background:#fff"></div><div style="left:775px;top:404px;width:569px;height:1px;background:#909090"></div><div style="left:775px;top:429px;width:569px;height:1px;background:#909090"></div><div style="left:775px;top:492px;width:569px;height:1px;background:#909090"></div><div style="left:775px;top:513px;width:569px;height:1px;background:#909090"></div><div style="left:30px;top:406px;width:68px;height:22px;background:#fff;border:1px solid #107c41"></div><div style="left:98px;top:406px;width:1px;height:22px;background:#fff"></div><div style="left:29px;top:405px;width:71px;height:1px;background:#fff"></div><div style="left:30px;top:386px;width:708px;height:1px;background:#000"></div><div style="left:30px;top:404px;width:708px;height:1px;background:#000"></div><div style="left:30px;top:429px;width:708px;height:1px;background:#000"></div><div style="left:30px;top:450px;width:708px;height:1px;background:#000"></div><div style="left:30px;top:471px;width:708px;height:1px;background:#000"></div><div style="left:30px;top:492px;width:708px;height:1px;background:#000"></div><div style="left:30px;top:513px;width:708px;height:1px;background:#000"></div><div style="left:30px;top:534px;width:708px;height:1px;background:#000"></div><div style="left:30px;top:555px;width:708px;height:1px;background:#000"></div><div style="left:30px;top:576px;width:708px;height:1px;background:#000"></div><div style="left:30px;top:597px;width:708px;height:1px;background:#000"></div><div style="left:30px;top:618px;width:708px;height:1px;background:#000"></div><div style="left:30px;top:639px;width:708px;height:1px;background:#000"></div><div style="left:30px;top:660px;width:708px;height:1px;background:#000"></div><div style="left:99px;top:386px;width:1px;height:288px;background:#000"></div><div style="left:254px;top:386px;width:1px;height:288px;background:#000"></div><div style="left:494px;top:386px;width:1px;height:288px;background:#000"></div><div style="left:575px;top:386px;width:1px;height:288px;background:#000"></div><div style="left:656px;top:386px;width:1px;height:288px;background:#000"></div><div style="left:737px;top:386px;width:1px;height:288px;background:#000"></div><div style="left:30px;top:405px;width:742px;height:1px;background:#fff"></div><div style="left:30px;top:428px;width:742px;height:1px;background:#fff"></div><div style="left:30px;top:493px;width:742px;height:1px;background:#fff"></div><div style="left:30px;top:512px;width:742px;height:1px;background:#fff"></div><div style="left:29px;top:243px;width:746px;height:1px;background:#0000d0"></div><div style="left:29px;top:243px;width:1px;height:431px;background:#0000d0"></div><div style="left:772px;top:243px;width:3px;height:162px;background:#0000d0"></div><div style="left:772px;top:429px;width:3px;height:64px;background:#0000d0"></div><div style="left:772px;top:513px;width:3px;height:161px;background:#0000d0"></div><span class="t c" style="left:279.0px;transform:scaleX(0.965);top:250.5px;font-size:24px;line-height:36px;color:#000;-webkit-text-stroke:0.12px #000;">お預かり現金収支表</span><span class="t c" style="left:30.0px;transform:scaleX(1.018);top:289.5px;font-size:16px;line-height:24px;color:#000;">清水淑子 様</span><span class="t c" style="left:30.0px;transform:scaleX(0.866);top:313.5px;font-size:14.67px;line-height:22px;color:#000;">ゴールドエイジエクセレント</span><span class="t c" style="left:30.0px;top:331.5px;font-size:14.67px;line-height:22px;color:#000;">2023年6月</span><span class="t c" style="left:30.0px;transform:scaleX(0.978);top:367.5px;font-size:14.67px;line-height:22px;color:#000;">お預かり現金</span><span class="t c" style="left:51.5px;transform:scaleX(0.894);top:384.5px;font-size:14.67px;line-height:22px;color:#000;">日付</span><span class="t c" style="left:156.6px;transform:scaleX(0.964);top:384.5px;font-size:14.67px;line-height:22px;color:#000;">収支先</span><span class="t c" style="left:363.0px;transform:scaleX(0.904);top:384.5px;font-size:14.67px;line-height:22px;color:#000;">摘要</span><span class="t c" style="left:505.4px;transform:scaleX(1.023);top:384.5px;font-size:14.67px;line-height:22px;color:#000;">収入金額</span><span class="t c" style="left:587.0px;transform:scaleX(1.006);top:384.5px;font-size:14.67px;line-height:22px;color:#000;">支払金額</span><span class="t c" style="left:667.3px;transform:scaleX(1.006);top:384.5px;font-size:14.67px;line-height:22px;color:#000;">差引残高</span><span class="t c" style="left:40.8px;transform:scaleX(0.949);top:429.1px;font-size:14.67px;line-height:22px;color:#000;">6月1日</span><span class="t c" style="left:136.5px;transform:scaleX(0.780);top:429.1px;font-size:14.67px;line-height:22px;color:#000;">ゴールドエイジ</span><span class="t c" style="left:266.0px;transform:scaleX(0.826);top:429.1px;font-size:14.67px;line-height:22px;color:#000;">(5/27)Sケア夜1枚安心パッド多いタイプ</span><span class="t c" style="left:563.8px;top:429.6px;font-size:14px;line-height:21px;color:#000;">0</span><span class="t c" style="left:617.6px;top:429.6px;font-size:14px;line-height:21px;color:#000;">1,155</span><span class="t c" style="left:691.0px;top:429.6px;font-size:14px;line-height:21px;color:#000;">17,894</span><span class="t c" style="left:40.8px;transform:scaleX(0.949);top:450.1px;font-size:14.67px;line-height:22px;color:#000;">6月1日</span><span class="t c" style="left:136.5px;transform:scaleX(0.780);top:450.1px;font-size:14.67px;line-height:22px;color:#000;">ゴールドエイジ</span><span class="t c" style="left:303.0px;transform:scaleX(0.823);top:450.1px;font-size:14.67px;line-height:22px;color:#000;">(5/27)ふきとりぬれタオル</span><span class="t c" style="left:563.8px;top:450.6px;font-size:14px;line-height:21px;color:#000;">0</span><span class="t c" style="left:629.2px;top:450.6px;font-size:14px;line-height:21px;color:#000;">303</span><span class="t c" style="left:691.0px;top:450.6px;font-size:14px;line-height:21px;color:#000;">17,591</span><span class="t c" style="left:40.8px;transform:scaleX(0.949);top:471.1px;font-size:14.67px;line-height:22px;color:#000;">6月1日</span><span class="t c" style="left:136.5px;transform:scaleX(0.780);top:471.1px;font-size:14.67px;line-height:22px;color:#000;">ゴールドエイジ</span><span class="t c" style="left:299.0px;transform:scaleX(0.806);top:471.1px;font-size:14.67px;line-height:22px;color:#000;">(5/27)ビオレ泡ハンドソープ</span><span class="t c" style="left:563.8px;top:471.6px;font-size:14px;line-height:21px;color:#000;">0</span><span class="t c" style="left:629.2px;top:471.6px;font-size:14px;line-height:21px;color:#000;">330</span><span class="t c" style="left:691.0px;top:471.6px;font-size:14px;line-height:21px;color:#000;">17,261</span><span class="t c" style="left:40.8px;transform:scaleX(0.949);top:492.1px;font-size:14.67px;line-height:22px;color:#000;">6月1日</span><span class="t c" style="left:136.5px;transform:scaleX(0.780);top:492.1px;font-size:14.67px;line-height:22px;color:#000;">ゴールドエイジ</span><span class="t c" style="left:307.0px;transform:scaleX(0.756);top:492.1px;font-size:14.67px;line-height:22px;color:#000;">トイレマジックリン詰替え</span><span class="t c" style="left:563.8px;top:492.6px;font-size:14px;line-height:21px;color:#000;">0</span><span class="t c" style="left:629.2px;top:492.6px;font-size:14px;line-height:21px;color:#000;">228</span><span class="t c" style="left:691.0px;top:492.6px;font-size:14px;line-height:21px;color:#000;">17,033</span><span class="t c" style="left:40.8px;transform:scaleX(0.949);top:513.1px;font-size:14.67px;line-height:22px;color:#000;">6月5日</span><span class="t c" style="left:146.5px;transform:scaleX(0.819);top:513.1px;font-size:14.67px;line-height:22px;color:#000;">清水　優様</span><span class="t c" style="left:350.0px;transform:scaleX(0.819);top:513.1px;font-size:14.67px;line-height:22px;color:#000;">お預り金</span><span class="t c" style="left:528.8px;top:513.6px;font-size:14px;line-height:21px;color:#000;">10,000</span><span class="t c" style="left:644.8px;top:513.6px;font-size:14px;line-height:21px;color:#000;">0</span><span class="t c" style="left:691.0px;top:513.6px;font-size:14px;line-height:21px;color:#000;">27,033</span><span class="t c" style="left:40.8px;transform:scaleX(0.949);top:534.1px;font-size:14.67px;line-height:22px;color:#000;">6月9日</span><span class="t c" style="left:118.5px;transform:scaleX(0.791);top:534.1px;font-size:14.67px;line-height:22px;color:#000;">介護タクシー福ちゃん</span><span class="t c" style="left:355.0px;transform:scaleX(0.864);top:534.1px;font-size:14.67px;line-height:22px;color:#000;">乗車賃</span><span class="t c" style="left:563.8px;top:534.6px;font-size:14px;line-height:21px;color:#000;">0</span><span class="t c" style="left:617.6px;top:534.6px;font-size:14px;line-height:21px;color:#000;">3,200</span><span class="t c" style="left:691.0px;top:534.6px;font-size:14px;line-height:21px;color:#000;">23,833</span><span class="t c" style="left:36.8px;transform:scaleX(0.952);top:555.1px;font-size:14.67px;line-height:22px;color:#000;">6月17日</span><span class="t c" style="left:157.5px;transform:scaleX(0.864);top:555.1px;font-size:14.67px;line-height:22px;color:#000;">森医院</span><span class="t c" style="left:338.0px;transform:scaleX(0.896);top:555.1px;font-size:14.67px;line-height:22px;color:#000;">5月分診療代</span><span class="t c" style="left:563.8px;top:555.6px;font-size:14px;line-height:21px;color:#000;">0</span><span class="t c" style="left:617.6px;top:555.6px;font-size:14px;line-height:21px;color:#000;">3,290</span><span class="t c" style="left:691.0px;top:555.6px;font-size:14px;line-height:21px;color:#000;">20,543</span><span class="t c" style="left:36.8px;transform:scaleX(0.952);top:576.1px;font-size:14.67px;line-height:22px;color:#000;">6月17日</span><span class="t c" style="left:157.5px;transform:scaleX(0.864);top:576.1px;font-size:14.67px;line-height:22px;color:#000;">森医院</span><span class="t c" style="left:325.0px;transform:scaleX(0.885);top:576.1px;font-size:14.67px;line-height:22px;color:#000;">5月分医療物品代</span><span class="t c" style="left:563.8px;top:576.6px;font-size:14px;line-height:21px;color:#000;">0</span><span class="t c" style="left:629.2px;top:576.6px;font-size:14px;line-height:21px;color:#000;">200</span><span class="t c" style="left:691.0px;top:576.6px;font-size:14px;line-height:21px;color:#000;">20,343</span><span class="t c" style="left:36.8px;transform:scaleX(0.952);top:597.1px;font-size:14.67px;line-height:22px;color:#000;">6月19日</span><span class="t c" style="left:136.5px;transform:scaleX(0.780);top:597.1px;font-size:14.67px;line-height:22px;color:#000;">ゴールドエイジ</span><span class="t c" style="left:325.0px;transform:scaleX(0.743);top:597.1px;font-size:14.67px;line-height:22px;color:#000;">ダヴ　ボディソープ</span><span class="t c" style="left:563.8px;top:597.6px;font-size:14px;line-height:21px;color:#000;">0</span><span class="t c" style="left:629.2px;top:597.6px;font-size:14px;line-height:21px;color:#000;">484</span><span class="t c" style="left:691.0px;top:597.6px;font-size:14px;line-height:21px;color:#000;">19,859</span><span class="t c" style="left:36.8px;transform:scaleX(0.952);top:618.1px;font-size:14.67px;line-height:22px;color:#000;">6月19日</span><span class="t c" style="left:136.5px;transform:scaleX(0.780);top:618.1px;font-size:14.67px;line-height:22px;color:#000;">ゴールドエイジ</span><span class="t c" style="left:310.0px;transform:scaleX(0.733);top:618.1px;font-size:14.67px;line-height:22px;color:#000;">ソフトインワンシャンプー</span><span class="t c" style="left:563.8px;top:618.6px;font-size:14px;line-height:21px;color:#000;">0</span><span class="t c" style="left:629.2px;top:618.6px;font-size:14px;line-height:21px;color:#000;">780</span><span class="t c" style="left:691.0px;top:618.6px;font-size:14px;line-height:21px;color:#000;">19,079</span><span class="t c" style="left:342.0px;transform:scaleX(0.873);top:406.0px;font-size:14.67px;line-height:22px;color:#000;">先月繰越金</span><span class="t c" style="left:528.8px;top:406.5px;font-size:14px;line-height:21px;color:#000;">17,033</span><div style="left:1347px;top:225px;width:17px;height:452px;background:#f6f6f6;border-radius:8.5px"></div><svg style="left:1351px;top:230px;" width="10" height="7" viewBox="0 0 10 7"><path d="M5 0.4 L9.6 6.6 H0.4 Z" fill="#7a7a7a"/></svg><div style="left:1351px;top:242px;width:9px;height:151px;background:#767676;border-radius:4.5px"></div><svg style="left:1351px;top:665px;" width="10" height="7" viewBox="0 0 10 7"><path d="M5 6.6 L9.6 0.4 H0.4 Z" fill="#7a7a7a"/></svg></section>
<section aria-label="sheet tabs / h-scroll"><div style="left:0px;top:674px;width:1366px;height:33px;background:#f0f0f0"></div><svg style="left:28px;top:684px;" width="8" height="11" viewBox="0 0 8 11"><path d="M6.6 0.8 L1.4 5.5 L6.6 10.2" fill="none" stroke="#9a9a9a" stroke-width="1.2"/></svg><svg style="left:60px;top:684px;" width="8" height="11" viewBox="0 0 8 11"><path d="M1.4 0.8 L6.6 5.5 L1.4 10.2" fill="none" stroke="#9a9a9a" stroke-width="1.2"/></svg><div style="left:116px;top:674px;width:166px;height:28px;background:#fff;border-radius:0 0 5px 5px;box-shadow:0 1px 2px rgba(0,0,0,.18)"></div><span class="t u" style="left:127.5px;transform:scaleX(1.075);top:679.0px;font-size:13.5px;line-height:20px;color:#222;">2023年6月清水淑子 様</span><div style="left:124px;top:697px;width:150px;height:2px;background:#107c41;border-radius:1px"></div><div style="left:286px;top:681px;width:1px;height:16px;background:#c8c8c8"></div><svg style="left:328px;top:683.5px;" width="12" height="12" viewBox="0 0 12 12"><path d="M6 0.5 V11.5 M0.5 6 H11.5" stroke="#333" stroke-width="1.1"/></svg><div style="left:820.5px;top:683.5px;width:2px;height:2px;background:#444;border-radius:1px"></div><div style="left:820.5px;top:688px;width:2px;height:2px;background:#444;border-radius:1px"></div><div style="left:820.5px;top:692.5px;width:2px;height:2px;background:#444;border-radius:1px"></div><div style="left:838px;top:680px;width:510px;height:18px;background:#f7f7f7;border-radius:9px"></div><svg style="left:842px;top:685px;" width="7" height="9" viewBox="0 0 7 9"><path d="M0.4 4.5 L6.6 0.2 V8.8 Z" fill="#767676"/></svg><div style="left:855px;top:685px;width:320px;height:9px;background:#767676;border-radius:4.5px"></div><svg style="left:1335px;top:685px;" width="7" height="9" viewBox="0 0 7 9"><path d="M6.6 4.5 L0.4 0.2 V8.8 Z" fill="#767676"/></svg><div style="left:1164px;top:675px;width:148px;height:32px;background:#dbdbdb"></div><div style="left:1170px;top:682px;width:1px;height:18px;background:#9a9a9a"></div><div style="left:1173px;top:682px;width:1px;height:18px;background:#9a9a9a"></div><span class="t u" style="left:1189.0px;transform:scaleX(0.892);top:673.8px;font-size:23.5px;line-height:35px;color:#2a2a2a;">A</span><svg style="left:1217px;top:680px;" width="19" height="22" viewBox="0 0 19 22">
<rect x="5.5" y="10.5" width="11.4" height="10.4" fill="none" stroke="#222" stroke-width="1.1"/>
<circle cx="14.4" cy="5" r="3.4" fill="#dbdbdb" stroke="#222" stroke-width="1.1"/>
<path d="M5.6 1.4 L9.4 10.4 M8.6 1.4 V10.4 M5.6 1.4 L8.6 4" fill="none" stroke="#222" stroke-width="1.1"/>
<path d="M0.6 10.5 H13" fill="none" stroke="#222" stroke-width="1.1"/>
<circle cx="10.4" cy="12.6" r="1.3" fill="#dbdbdb" stroke="#222" stroke-width="1"/>
</svg><span class="t u" style="left:1251.0px;transform:scaleX(0.795);top:676.8px;font-size:11px;line-height:16px;color:#222;">かな</span><span class="t u" style="left:1252.0px;transform:scaleX(0.705);top:691.3px;font-size:11px;line-height:16px;color:#222;">オフ</span><svg style="left:1282px;top:681px;" width="20" height="20" viewBox="0 0 20 20">
<path d="M10 1.2 L11.9 1.4 L12.6 3.9 L14.4 4.7 L16.7 3.5 L18 5 L16.6 7.2 L17.3 9 L19.8 9.6 V11.4 L17.3 12 L16.6 13.9 L18 16 L16.6 17.5 L14.4 16.3 L12.6 17.1 L11.9 19.6 H10 L8.1 19.6 L7.4 17.1 L5.6 16.3 L3.4 17.5 L2 16 L3.4 13.9 L2.7 12 L0.2 11.4 V9.6 L2.7 9 L3.4 7.2 L2 5 L3.3 3.5 L5.6 4.7 L7.4 3.9 L8.1 1.4 Z" fill="none" stroke="#222" stroke-width="1.1" transform="translate(0,-0.4)"/>
<circle cx="10" cy="10" r="3.2" fill="none" stroke="#222" stroke-width="1.1"/>
</svg></section>
<section aria-label="status bar"><div style="left:0px;top:707px;width:1366px;height:21px;background:#f3f3f3"></div><span class="t u" style="left:8.0px;transform:scaleX(0.979);top:709.4px;font-size:12px;line-height:18px;color:#333;">準備完了</span><svg style="left:75px;top:710px;" width="16" height="15" viewBox="0 0 16 15">
<path d="M0.6 11.6 V1.4 H13.6 V6" fill="none" stroke="#333" stroke-width="1.1"/>
<path d="M0.6 2 H13.6" stroke="#333" stroke-width="2"/>
<path d="M2.4 5.6 H6.4 M2.4 8.4 H5.4 M0.6 11.4 H5.4" stroke="#333" stroke-width="1"/>
<circle cx="9.8" cy="9.6" r="3.9" fill="#f3f3f3" stroke="#333" stroke-width="1.1"/><circle cx="9.8" cy="9.6" r="1.7" fill="#333"/>
</svg><svg style="left:106px;top:709px;" width="17" height="16" viewBox="0 0 17 16">
<circle cx="7" cy="2.8" r="1.8" fill="none" stroke="#333" stroke-width="1"/>
<path d="M1.2 4.6 C3.4 6.4 10.6 6.4 12.8 4.6 M4.6 6.2 V9.4 L3.2 14.6 M9.4 6.2 V8 M4.6 9.4 L7 8.6 L8.6 14.6" fill="none" stroke="#333" stroke-width="1.1"/>
<path d="M11.2 9.8 C11.2 7.6 15 7.6 15 9.8 C15 11.2 13.1 11.2 13.1 12.8" fill="none" stroke="#333" stroke-width="1.1"/>
<circle cx="13.1" cy="14.6" r="0.7" fill="#333"/>
</svg><span class="t u" style="left:125.0px;transform:scaleX(0.724);top:709.4px;font-size:12px;line-height:18px;color:#333;">アクセシビリティ:</span><span class="t u" style="left:201.3px;transform:scaleX(0.979);top:709.4px;font-size:12px;line-height:18px;color:#333;">利用不可</span><span class="t u" style="left:769.2px;transform:scaleX(0.987);top:709.4px;font-size:12px;line-height:18px;color:#333;">平均:</span><span class="t u" style="left:801.7px;top:709.4px;font-size:12px;line-height:18px;color:#333;">6月21日</span><span class="t u" style="left:863.2px;transform:scaleX(0.869);top:709.4px;font-size:12px;line-height:18px;color:#333;">データの個数:</span><span class="t u" style="left:934.6px;transform:scaleX(0.897);top:709.4px;font-size:12px;line-height:18px;color:#333;">8</span><span class="t u" style="left:957.0px;transform:scaleX(1.006);top:709.4px;font-size:12px;line-height:18px;color:#333;">合計:</span><span class="t u" style="left:990.6px;transform:scaleX(1.012);top:709.4px;font-size:12px;line-height:18px;color:#333;">11月21日</span><svg style="left:1072px;top:711px;" width="15" height="13" viewBox="0 0 15 13"><rect x="0.5" y="0.5" width="13.6" height="11.6" fill="none" stroke="#333" stroke-width="1"/><path d="M5 0.5 V12 M9.6 0.5 V12 M0.5 4.4 H14 M0.5 8.2 H14" stroke="#333" stroke-width="1"/></svg><svg style="left:1113px;top:711px;" width="15" height="13" viewBox="0 0 15 13"><rect x="0.5" y="0.5" width="13.6" height="11.6" fill="none" stroke="#333" stroke-width="1"/><rect x="3.4" y="3" width="7.8" height="6.6" fill="none" stroke="#333" stroke-width="1"/><path d="M5 5 H9.6 M5 7.4 H9.6" stroke="#333" stroke-width="0.9"/></svg><div style="left:1140px;top:707px;width:40px;height:21px;background:#dcdcdc"></div><svg style="left:1153px;top:711px;" width="15" height="13" viewBox="0 0 15 13"><rect x="0.5" y="0.5" width="13.6" height="11.6" fill="none" stroke="#333" stroke-width="1"/><path d="M4.6 0.5 V6.4 H9.8 V0.5 M9.8 3.6 H14" fill="none" stroke="#333" stroke-width="1"/></svg><div style="left:1186px;top:717px;width:8px;height:1px;background:#444"></div><div style="left:1199px;top:717px;width:100px;height:1px;background:#8a8a8a"></div><div style="left:1247px;top:712px;width:4.5px;height:11px;background:#767676"></div><svg style="left:1304px;top:713px;" width="9" height="9" viewBox="0 0 9 9"><path d="M4.5 0.5 V8.5 M0.5 4.5 H8.5" stroke="#444" stroke-width="1"/></svg><span class="t u" style="left:1326.0px;transform:scaleX(1.010);top:708.6px;font-size:12px;line-height:18px;color:#333;">100%</span></section>
<section aria-label="windows taskbar"><div style="left:0px;top:728px;width:1366px;height:40px;background:linear-gradient(100deg,#3c3234 0%,#3c3133 55%,#46292b 100%)"></div><svg style="left:15px;top:740px;" width="17" height="17" viewBox="0 0 17 17"><path d="M0 2.4 L7.2 1.4 V8 H0 Z M8.2 1.2 L17 0 V8 H8.2 Z M0 9 H7.2 V15.6 L0 14.6 Z M8.2 9 H17 V17 L8.2 15.8 Z" fill="#fff"/></svg><div style="left:48px;top:728px;width:288px;height:40px;background:#f3f3f3;border-top:1px solid #c6c6c6"></div><svg style="left:59px;top:739px;" width="18" height="18" viewBox="0 0 18 18"><circle cx="11.4" cy="6.4" r="4.8" fill="none" stroke="#333" stroke-width="1.4"/><path d="M7.4 10.2 L1.2 16.6" stroke="#333" stroke-width="1.4"/></svg><span class="t u" style="left:88.5px;transform:scaleX(0.892);top:738.1px;font-size:14px;line-height:21px;color:#3a3a3a;">ここに入力して検索</span><svg style="left:258px;top:729px;" width="78" height="39" viewBox="0 0 78 39"><path d="M49.6 8.9 L71.0 39 H20.3 Z" fill="#0a0a0a"/><path d="M49.6 10.9 L69.6 39 H22.3 Z" fill="#7a4a2a"/><path d="M49.6 13.1 L68.0 39 H24.4 Z" fill="#62c8f0"/><path d="M49.6 14.9 L66.7 39 H26.2 Z" fill="#f5b3c4"/><path d="M49.6 16.5 L65.6 39 H27.7 Z" fill="#fff"/><path d="M49.6 18.1 L64.5 39 H29.3 Z" fill="#f7d428"/><path d="M49.6 19.9 L63.2 39 H31.0 Z" fill="#f3f3f3"/><path d="M49.6 21.9 L61.8 39 H33.0 Z" fill="#f7d428"/><path d="M49.6 23.5 L60.6 39 H34.5 Z" fill="#f3f3f3"/><path d="M7.5 24 L7.5 28.3 L54.5 35.4 L54.5 33.6 Z" fill="#8a12b0"/><path d="M4 17.8 L4 22.7 L8 24 L54.5 33.8 L54.3 32 Z" fill="#3d62f5"/><path d="M7 14.6 L7 18.6 L54.3 32.2 L54 30.5 Z" fill="#1fb41f"/><path d="M2.5 8.9 L2.5 13.2 L7 14.8 L54 30.7 L53.4 28.4 Z" fill="#ffe600"/><path d="M8 6.6 L8 11 L53.4 28.6 L52.6 26 Z" fill="#ff8c1e"/><path d="M7 2.6 L7 7 L52.6 26.2 L51.3 23.4 Z" fill="#f5182a"/></svg><svg style="left:350px;top:739px;" width="20" height="17" viewBox="0 0 20 17">
<g fill="none" stroke="#fff" stroke-width="1.25">
<rect x="2.2" y="5.4" width="11" height="6.8"/>
<path d="M2.2 3 V1.7 H13.2 V3 M2.2 14.6 V15.9 H13.2 V14.6 M16.4 1 V16.6"/>
</g>
<rect x="15" y="5" width="3" height="3" fill="#fff"/>
</svg><svg style="left:400px;top:738px;" width="22" height="19" viewBox="0 0 22 19">
<path d="M0 1 H8.4 L9.8 2.6 H22 V18 H0 Z" fill="#e9a800"/>
<rect x="0" y="2.8" width="22" height="15.2" fill="#ffd75e"/>
<path d="M0 2.8 H9 L10 3.6 H22 V5 H0 Z" fill="#ffe28a"/>
<path d="M4 19 V11.4 Q4 10.6 4.8 10.6 H17.2 Q18 10.6 18 11.4 V19 H14.4 V14.6 H7.6 V19 Z" fill="#3a96dd"/>
<rect x="7.6" y="14.6" width="6.8" height="3.4" fill="#f4c542"/>
</svg><svg style="left:448px;top:735px;" width="24" height="25" viewBox="0 0 24 25">
<defs>
<linearGradient id="eg1" x1="0" y1="0.6" x2="1" y2="0.2"><stop offset="0" stop-color="#2393e6"/><stop offset="0.55" stop-color="#2fc0d8"/><stop offset="1" stop-color="#63e05c"/></linearGradient>
<linearGradient id="eg2" x1="0" y1="0" x2="0.6" y2="1"><stop offset="0" stop-color="#1b86dc"/><stop offset="1" stop-color="#0c4aa6"/></linearGradient>
</defs>
<path d="M12 0.4 C19 0.4 23.8 5.6 23.7 11.6 C23.6 15.2 20.8 17.2 17.6 16.8 C15.4 16.5 14.2 14.8 15 13.2 C16.4 10.2 13.8 7 10 7 C5.6 7 1.6 10.4 0.4 13.6 C-0.4 6.4 5 0.4 12 0.4 Z" fill="url(#eg1)"/>
<path d="M0.4 13.6 C0.6 9.6 5 6.6 9.6 6.8 C12 6.9 14 8 14.8 9.8 C10.6 9.6 8.2 12.6 8.8 15.8 C9.6 19.8 13.6 22 17.6 21.6 C19.6 21.4 21.2 20.6 22.4 19.4 C20.4 22.6 16.6 24.6 12.4 24.4 C5.6 24.2 0.4 19.4 0.4 13.6 Z" fill="url(#eg2)"/>
<path d="M8.8 15.8 C8.2 12.6 10.6 9.6 14.8 9.8 C12.6 11 12 13 12.6 15 C13.6 18.4 17.6 20.2 22.4 19.4 C21.2 20.6 19.6 21.4 17.6 21.6 C13.6 22 9.6 19.8 8.8 15.8 Z" fill="#0b3f94"/>
</svg><svg style="left:497px;top:736px;" width="24" height="24" viewBox="0 0 24 24">
<circle cx="12" cy="12" r="11.6" fill="#f7c81e"/>
<path d="M12 12 L1.95 6.2 A11.6 11.6 0 0 1 22.05 6.2 Z" fill="#e33b2e"/>
<path d="M12 12 L1.95 6.2 A11.6 11.6 0 0 0 12 23.6 L17.4 14.6 Z" fill="#2da94f"/>
<path d="M12 6.2 H22.05 A11.6 11.6 0 0 1 12 23.6 L17.4 14.6 Z" fill="#f7c81e"/>
<circle cx="12" cy="12" r="5.4" fill="#fff"/>
<circle cx="12" cy="12" r="4.2" fill="#3c78e6"/>
</svg><svg style="left:546px;top:736px;" width="24" height="24" viewBox="0 0 24 24">
<defs><linearGradient id="gg" x1="0" y1="0" x2="1" y2="1"><stop offset="0" stop-color="#4fb85a"/><stop offset="0.5" stop-color="#2a9a45"/><stop offset="1" stop-color="#14702c"/></linearGradient></defs>
<rect x="0" y="0" width="24" height="24" rx="2.6" fill="url(#gg)"/>
<path d="M12 6 L24 18 V21.4 Q24 24 21.4 24 H10 Z" fill="#146a2a" opacity="0.55"/>
<rect x="9.6" y="2.2" width="6.8" height="17" rx="3.4" fill="#f4f6ee"/>
<path d="M15.4 8.6 C19 6.6 22 8.6 21 12.4 C20.4 15.4 18.2 17.8 15.4 17.8 Z" fill="#f4f6ee"/>
<circle cx="11.6" cy="18" r="3.3" fill="#f2e86a" stroke="#fffbe0" stroke-width="0.5"/>
<text x="3.6" y="16" font-family="Liberation Sans, sans-serif" font-size="7.5" font-weight="bold" fill="#f4f6ee">D</text>
<text x="3.4" y="8.8" font-family="Liberation Sans, sans-serif" font-size="5" font-weight="bold" fill="#d8f0d8">..</text>
<text x="15.6" y="16.4" font-family="Liberation Sans, sans-serif" font-size="7.5" font-weight="bold" font-style="italic" fill="#1f8a3a">7</text>
</svg><svg style="left:594px;top:737px;" width="26" height="22" viewBox="0 0 26 22">
<rect x="7.2" y="0" width="18" height="21.4" rx="1.2" fill="#21a366"/>
<rect x="16.2" y="0" width="9" height="5.4" fill="#33c481"/>
<rect x="7.2" y="5.4" width="9" height="5.4" fill="#107c41"/>
<rect x="16.2" y="10.8" width="9" height="5.4" fill="#107c41"/>
<rect x="7.2" y="10.8" width="9" height="10.6" fill="#185c37"/>
<rect x="16.2" y="16.2" width="9" height="5.2" fill="#185c37"/>
<rect x="1" y="5.1" width="12.3" height="12" rx="1" fill="#107c41"/>
<path d="M4.4 7.8 L9.8 14.6 M9.8 7.8 L4.4 14.6" stroke="#fff" stroke-width="1.7"/>
</svg><div style="left:391px;top:766px;width:31px;height:2px;background:#76b9ed"></div><div style="left:423px;top:766px;width:8px;height:2px;background:#5a89ad"></div><div style="left:440px;top:766px;width:40px;height:2px;background:#76b9ed"></div><div style="left:489px;top:766px;width:40px;height:2px;background:#76b9ed"></div><div style="left:538px;top:766px;width:40px;height:2px;background:#76b9ed"></div><div style="left:587px;top:766px;width:31px;height:2px;background:#76b9ed"></div><div style="left:619px;top:766px;width:8px;height:2px;background:#5a89ad"></div><svg style="left:1069px;top:739px;" width="17" height="17" viewBox="0 0 17 17"><circle cx="11.6" cy="4" r="2.8" fill="none" stroke="#fff" stroke-width="1.2"/><circle cx="5" cy="8" r="2.8" fill="none" stroke="#fff" stroke-width="1.2"/><path d="M0.6 16.4 C0.6 12.6 3 11 5 11 C7 11 9 12.4 9.4 14 M8 9.6 C9 7.6 14 6.4 16.4 11" fill="none" stroke="#fff" stroke-width="1.2"/></svg><svg style="left:1106px;top:743px;" width="14" height="9" viewBox="0 0 14 9"><path d="M1 8 L7 1.6 L13 8" fill="none" stroke="#fff" stroke-width="1.3"/></svg><svg style="left:1129px;top:739px;" width="18" height="18" viewBox="0 0 18 18"><path d="M13 1.6 H2.6 Q0.8 1.6 0.8 3.4 V11 Q0.8 12.8 2.6 12.8 H9 M5 15.4 H9.6 M7 13 V15.4" fill="none" stroke="#fff" stroke-width="1.2"/><path d="M4.6 9.6 L6 5 L9.6 4 M6 8.6 L9.8 7.6" fill="none" stroke="#fff" stroke-width="1"/><circle cx="13" cy="13" r="3.6" fill="#1e6fd0"/></svg><svg style="left:1152px;top:741px;" width="18" height="13" viewBox="0 0 18 13"><rect x="5" y="3" width="11" height="7.4" fill="none" stroke="#fff" stroke-width="1.2"/><path d="M16.6 5.4 V8.2" stroke="#fff" stroke-width="1.4"/><rect x="6.6" y="4.6" width="7.8" height="4.2" fill="#fff"/><path d="M0.6 2 V5 Q0.6 7 3 7 V11 M0.6 3 H4.6 V5 Q4.6 7 3 7 M1.6 0 V2 M3.6 0 V2" fill="none" stroke="#fff" stroke-width="1"/></svg><svg style="left:1177px;top:741px;" width="16" height="13" viewBox="0 0 16 13"><path d="M0.8 4.4 H3.6 L7.4 0.8 V12.2 L3.6 8.6 H0.8 Z" fill="none" stroke="#fff" stroke-width="1.1"/><path d="M10 4.2 L14.4 8.8 M14.4 4.2 L10 8.8" stroke="#fff" stroke-width="1.1"/></svg><svg style="left:1200px;top:740px;" width="18" height="16" viewBox="0 0 18 16"><rect x="4.6" y="1" width="12" height="8.6" fill="none" stroke="#fff" stroke-width="1.2"/><path d="M7 14.6 H14.6 M10.8 9.6 V14.6" stroke="#fff" stroke-width="1.2"/><rect x="0.6" y="3.6" width="5" height="3.4" fill="#3b3132" stroke="#fff" stroke-width="1"/><path d="M3 7 V12.6 H0.6 M3 12.6 H5.6" fill="none" stroke="#fff" stroke-width="1"/></svg><span class="t u" style="left:1225.5px;transform:scaleX(1.025);top:734.0px;font-size:19px;line-height:28px;color:#fff;">A</span><span class="t u" style="left:1265.0px;transform:scaleX(0.866);top:730.5px;font-size:12px;line-height:18px;color:#fff;">14:42</span><span class="t u" style="left:1249.0px;transform:scaleX(0.966);top:748.0px;font-size:12px;line-height:18px;color:#fff;">2023/06/28</span><svg style="left:1324px;top:739px;" width="18" height="18" viewBox="0 0 18 18"><path d="M0.6 0.6 H17 V13 H11 L8.8 16.6 L6.6 13 H0.6 Z" fill="#fff"/><path d="M3.6 4.4 H14 M3.6 7 H14 M3.6 9.6 H11" stroke="#3b3132" stroke-width="1.1"/></svg><div style="left:1361px;top:728px;width:1px;height:40px;background:#8a8284"></div></section>
</body></html>
